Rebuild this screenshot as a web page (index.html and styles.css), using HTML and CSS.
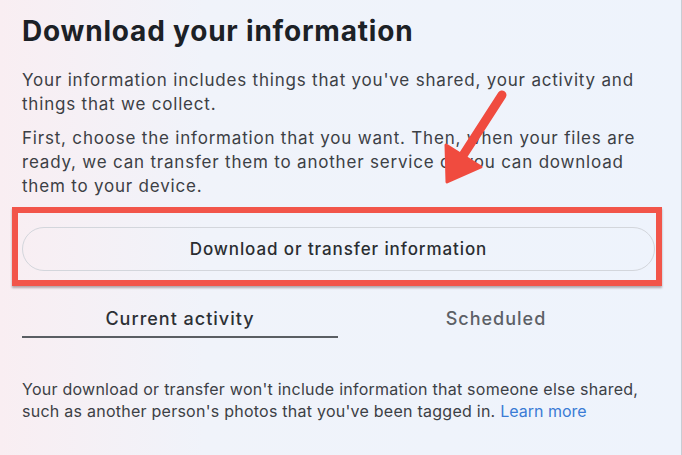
FILE: index.html
```html
<!DOCTYPE html>
<html>
<head>
<meta charset="utf-8">
<link rel="stylesheet" href="styles.css">
</head>
<body>
<div class="page">
  <h1 class="title">Download your information</h1>
  <p class="text">Your information includes things that you've shared, your activity and things that we collect.</p>
  <p class="text">First, choose the information that you want. Then, when your files are ready, we can transfer them to another service or you can download them to your device.</p>
  <div class="highlight">
    <button class="btn">Download or transfer information</button>
  </div>
  <div class="tabs">
    <div class="tab active">Current activity</div>
    <div class="tab">Scheduled</div>
  </div>
  <p class="note">Your download or transfer won't include information that someone else shared, such as another person's photos that you've been tagged in. <a class="link">Learn more</a></p>
  <svg class="arrow" width="682" height="455" viewBox="0 0 682 455">
    <line x1="502" y1="95" x2="462" y2="157" stroke="#f04b3f" stroke-width="9" stroke-linecap="round"/>
    <polygon points="447,182 446,145 481,167" fill="#f04b3f" stroke="#f04b3f" stroke-width="3" stroke-linejoin="round"/>
  </svg>
</div>
</body>
</html>
```
FILE: styles.css
```css
* { box-sizing: border-box; }
html, body { margin: 0; padding: 0; }
body {
  width: 682px;
  height: 455px;
  overflow: hidden;
  font-family: "Inter", "Roboto", sans-serif;
  color: #1c1e21;
}
.page {
  position: relative;
  width: 682px;
  height: 455px;
  background: linear-gradient(90deg, #f9eef2 0%, #f0f3fa 30%, #eef3fc 100%);
  border-right: 1px solid #c9ccd3;
  padding: 13px 0 0 22px;
  display: flex;
  flex-direction: column;
}
.title {
  margin: 0;
  font-size: 28px;
  font-weight: 700;
  line-height: 36px;
  color: #1c2126;
  letter-spacing: 0.8px;
}
.text {
  margin: 19px 0 0;
  width: 640px;
  font-size: 17px;
  line-height: 24px;
  letter-spacing: 0.8px;
  color: #3c4045;
}
.text + .text { margin-top: 10px; }
.highlight {
  margin: 9px 0 0 -10px;
  width: 650px;
  height: 79px;
  border: 6px solid #f2554a;
  box-shadow: 0 2px 2px rgba(60, 30, 30, 0.35);
  padding: 14px 0 0 4px;
}
.btn {
  display: block;
  width: 633px;
  height: 44px;
  border: 1px solid #d3d6dc;
  border-radius: 22px;
  background: transparent;
  font-family: inherit;
  font-size: 17px;
  font-weight: 500;
  letter-spacing: 0.9px;
  color: #2a2d31;
}
.tabs {
  display: flex;
  margin-top: 16px;
  width: 632px;
}
.tab {
  width: 316px;
  text-align: center;
  font-size: 18px;
  line-height: 22px;
  font-weight: 500;
  letter-spacing: 1px;
  color: #5c6066;
  padding: 6px 0 6px;
  border-bottom: 2px solid transparent;
}
.tab.active {
  color: #2c3035;
  border-bottom-color: #5a5e63;
}
.note {
  margin: 40px 0 0;
  width: 640px;
  font-size: 16px;
  line-height: 22px;
  letter-spacing: 0.25px;
  color: #3c4045;
}
.link { color: #3a7bd5; letter-spacing: 0; }
.arrow {
  position: absolute;
  left: 0;
  top: 0;
  pointer-events: none;
}
```
